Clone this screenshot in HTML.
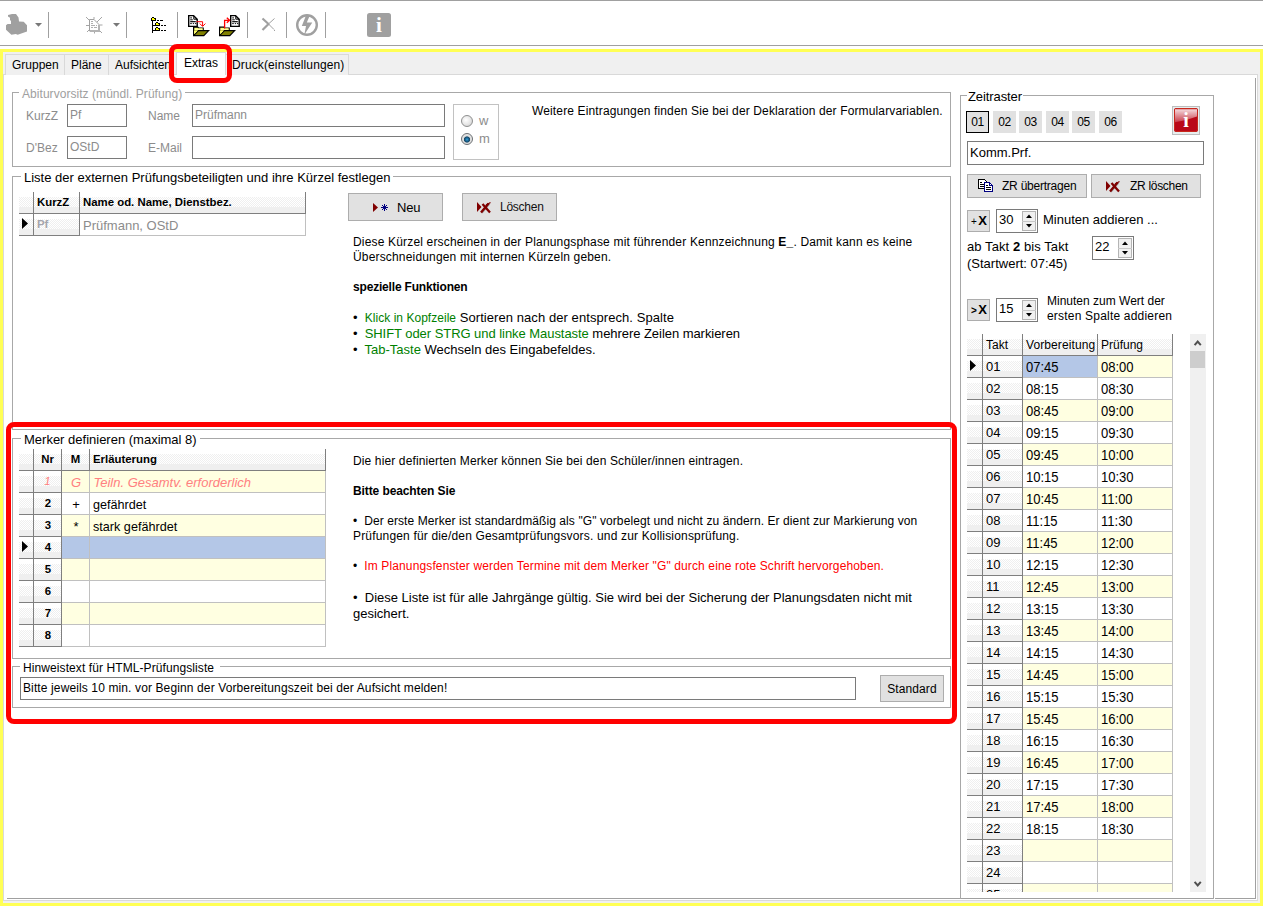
<!DOCTYPE html>
<html lang="de"><head><meta charset="utf-8"><title>Extras</title>
<style>
*{box-sizing:border-box;margin:0;padding:0}
html,body{width:1263px;height:906px;overflow:hidden;background:#fff}
body{position:relative;font-family:"Liberation Sans",sans-serif;font-size:12px;color:#000}
.a{position:absolute}
.t{position:absolute;white-space:pre;line-height:16px}
.f13{font-size:13px}
.f12{font-size:12px}
.sep{position:absolute;top:12px;width:1px;height:26px;background:#a0a0a0}
.tab{position:absolute;top:54px;height:21px;border:1px solid #d9d9d9;border-bottom:none;background:#f0f0f0;font-size:12px;line-height:21px;text-align:left;padding-left:6px;white-space:pre}
.gb{position:absolute;border:1px solid #a8a8a8}
.gbc{position:absolute;background:#fff;white-space:pre;line-height:16px;padding:0 3px}
.inp{position:absolute;border:1px solid #7a7a7a;background:#fff;white-space:pre;font-size:12px;line-height:20px;padding-left:2px;overflow:hidden}
.btn{position:absolute;background:#e1e1e1;border:1px solid #adadad;white-space:pre}
.fx{position:absolute;background:linear-gradient(#fff,#fff) 0 0/100% 5px no-repeat,linear-gradient(#efefef,#efefef) 0 100%/100% 6px no-repeat,repeating-conic-gradient(#efefef 0 25%,#fff 0 50%) 0 0/2px 2px;border-right:1px solid #7f7f7f;border-bottom:1px solid #7f7f7f;white-space:pre;overflow:hidden}
.hb{font-weight:bold;font-size:11.4px;line-height:20px}
.c{position:absolute;border-right:1px solid #c0c0c0;border-bottom:1px solid #c0c0c0;white-space:pre;overflow:hidden;font-size:13px;line-height:22px;padding-left:4px;padding-top:1px}
.y{background:#ffffe1}
.w{background:#fff}
.sel{background:#b4c7e7}
.tv{display:inline-block;font-size:14px;transform:scaleX(.93);transform-origin:0 50%}
.seg{font-family:"Liberation Sans",sans-serif}
</style></head>
<body>
<div class="a" style="left:0;top:0;width:1263px;height:1px;background:#a0a0a0"></div>
<div class="a" style="left:0;top:45px;width:1263px;height:1px;background:#a0a0a0"></div>
<div class="sep" style="left:48px"></div>
<div class="sep" style="left:126px"></div>
<div class="sep" style="left:177px"></div>
<div class="sep" style="left:247px"></div>
<div class="sep" style="left:286px"></div>
<div class="sep" style="left:325px"></div>
<svg class="a" style="left:0;top:0" width="420" height="46" viewBox="0 0 420 46">
<polygon fill="#a0a0a0" points="8,15 12,14 16,14 18.5,17.5 19,21.5 23.7,21.8 27,25.3 27,31.6 22,33.2 17.7,34.8 15.8,34 11.4,34.8 6,29.7 6,25.3 7.6,24 11,24 11,21 10,20 10,17.7 8,16.4"/>
<polygon fill="#787878" points="35,23 42,23 38.5,26.8"/>
<polygon fill="#787878" points="113,23 120,23 116.5,26.8"/>
<g stroke="#a6a6a6" stroke-width="1" fill="none"><path d="M86,17 L89.5,20.5 M94,17 V19.5 M102,17 L96.5,22.5 M86,25.5 H89 M100,25 H102.5 M87,32 L89.5,29.5 M94.5,32 V33.5 M99.5,30.5 L102,33"/><path d="M89.5,19.5 H94 L99.5,25 V31 H89.5 Z" fill="#fff" stroke="#a0a0a0"/><path d="M90,31 H100 M99,25 V31.5" stroke="#b4b4b4" stroke-width="2"/><path d="M91,21.5 H93 M91,23.5 H93 M91,25.5 H95 M96,25.5 H97 M91,27.5 H93 M94,27.5 H97" stroke="#b0b0b0" shape-rendering="crispEdges"/></g>
<g shape-rendering="crispEdges"><rect x="152" y="20" width="1" height="13" fill="#000"/><path d="M151,18 h1 v-1 h2 v1 h2 v3 h-5 z" fill="#000"/><path d="M152,18 h2 v1 h1 v1 h-3 z" fill="#ffff00"/><path d="M155,23 h1 v-1 h2 v1 h2 v3 h-5 z" fill="#000"/><path d="M156,23 h2 v1 h1 v1 h-3 z" fill="#ffff00"/><path d="M155,28 h1 v-1 h2 v1 h2 v3 h-5 z" fill="#000"/><path d="M156,28 h2 v1 h1 v1 h-3 z" fill="#ffff00"/><path d="M153,25 h2 M153,30 h2" stroke="#000"/><path d="M157,20.5 h2 M160,20.5 h3 M161,25.5 h2 M164,25.5 h2 M161,30.5 h2 M164,30.5 h2" stroke="#000" stroke-width="1"/></g>
<g><path d="M188.7,15.6 H193.6 L197.2,19.4 V26.4 H188.7 Z" fill="#fff" stroke="#000" stroke-width="1.4" stroke-linejoin="miter"/><path d="M193.8,16 V19.2 H197" fill="none" stroke="#000" stroke-width="1"/><path d="M190.2,17.9 h1.8 M190.2,19.8 h2.6 M190.2,23.6 h1.6 M192.8,23.6 h1.3 M195,23.6 h1.2" stroke="#000" stroke-width=".95"/><path d="M190.2,21.7 h5.6" stroke="#000" stroke-width="1.2"/><path d="M193.6,27.200000000000003 H197.8 L198.6,28.0 H203.2 V30.400000000000002 H193.6 Z" fill="#ffff55" stroke="#000" stroke-width="1.2"/><path d="M194.2,28.400000000000002 H202.6 V30.200000000000003 H194.2 Z" fill="#ffffa0"/><path d="M193.6,27.200000000000003 V35.6 H203.8 L208.6,30.6 H198.4 L193.6,35.6" fill="#808000" stroke="#000" stroke-width="1.2" stroke-linejoin="miter"/><path d="M194.2,30.200000000000003 V34.2 L198,30.200000000000003 Z" fill="#ffff55"/><path d="M196.4,21.7 H202.6 V26 M199.8,23.6 L202.6,26.4 L205.4,23.6" fill="none" stroke="#ff0000" stroke-width="1"/></g>
<g><path d="M219.6,27.200000000000003 H223.8 L224.6,28.0 H229.2 V30.400000000000002 H219.6 Z" fill="#ffff55" stroke="#000" stroke-width="1.2"/><path d="M220.2,28.400000000000002 H228.6 V30.200000000000003 H220.2 Z" fill="#ffffa0"/><path d="M219.6,27.200000000000003 V35.6 H229.8 L234.6,30.6 H224.4 L219.6,35.6" fill="#808000" stroke="#000" stroke-width="1.2" stroke-linejoin="miter"/><path d="M220.2,30.200000000000003 V34.2 L224,30.200000000000003 Z" fill="#ffff55"/><path d="M230.7,15.6 H235.6 L239.2,19.4 V26.4 H230.7 Z" fill="#fff" stroke="#000" stroke-width="1.4" stroke-linejoin="miter"/><path d="M235.8,16 V19.2 H239" fill="none" stroke="#000" stroke-width="1"/><path d="M232.2,17.9 h1.8 M232.2,19.8 h2.6 M232.2,23.6 h1.6 M234.8,23.6 h1.3 M237,23.6 h1.2" stroke="#000" stroke-width=".95"/><path d="M232.2,21.7 h5.6" stroke="#000" stroke-width="1.2"/><path d="M224.6,28.5 V20.3 H229.4 M226.8,17.8 L229.6,20.3 L226.8,22.8" fill="none" stroke="#ff0000" stroke-width="1.3"/></g>
<path d="M262.5,18.5 L268.5,24 M262.5,30 L269,23.5" stroke="#a0a0a0" stroke-width="2.2" fill="none"/><path d="M268.5,24 L274,29.5 M269,23.5 L274.5,18.5" stroke="#a0a0a0" stroke-width="1" fill="none"/><rect x="274" y="30" width="1" height="1" fill="#a0a0a0"/>
<circle cx="307" cy="25" r="9.8" fill="none" stroke="#a0a0a0" stroke-width="2.4"/><polygon fill="#a0a0a0" points="306,15.5 309.8,15.5 306.8,22.5 312.3,22.5 304.3,34.8 306,26 301.8,26"/>
<rect x="367" y="13" width="24" height="24" rx="2.5" fill="#a0a0a0"/>
<text x="379" y="32.3" font-family="Liberation Serif, serif" font-weight="bold" font-size="21" fill="#fff" text-anchor="middle">i</text>
</svg>
<div class="a" style="left:0;top:49px;width:1263px;height:857px;background:#f0f0f0;border:3px solid #ffff55"></div>
<div class="a" style="left:3px;top:74px;width:1255px;height:827px;background:#fff;border:1px solid #d9d9d9"></div>
<div class="tab" style="left:5px;width:60px">Gruppen</div>
<div class="tab" style="left:64px;width:45px">Pläne</div>
<div class="tab" style="left:108px;width:66px">Aufsichten</div>
<div class="tab" style="left:225px;width:124px;letter-spacing:.12px">Druck(einstellungen)</div>
<div class="tab" style="left:176px;width:50px;top:52px;height:23px;background:#fff;line-height:20px;padding-left:7px">Extras</div>
<div class="a" style="left:7px;top:898px;width:1207px;height:1px;background:#a0a0a0"></div>
<div class="a" style="left:1215px;top:898px;width:41px;height:1px;background:#a0a0a0"></div>
<div class="a" style="left:1255px;top:78px;width:1px;height:821px;background:#a0a0a0"></div>
<div class="gb" style="left:12px;top:92px;width:939px;height:75px"></div>
<div class="gbc f12" style="left:19px;top:86px;color:#a0a0a0;letter-spacing:.05px">Abiturvorsitz (mündl. Prüfung)</div>
<div class="t f12" style="left:26px;top:108px;color:#8c8c8c">KurzZ</div>
<div class="inp" style="left:67px;top:104px;width:60px;height:23px;color:#8c8c8c">Pf</div>
<div class="t f12" style="left:148px;top:108px;color:#8c8c8c">Name</div>
<div class="inp" style="left:192px;top:104px;width:253px;height:23px;color:#8c8c8c">Prüfmann</div>
<div class="t f12" style="left:26px;top:140px;color:#8c8c8c">D'Bez</div>
<div class="inp" style="left:67px;top:136px;width:60px;height:23px;color:#8c8c8c">OStD</div>
<div class="t f12" style="left:148px;top:140px;color:#8c8c8c">E-Mail</div>
<div class="inp" style="left:192px;top:136px;width:253px;height:23px"></div>
<div class="a" style="left:453px;top:104px;width:46px;height:56px;border:1px solid #c2c2c2;background:#fff"></div>
<div class="a" style="left:461px;top:115px;width:12px;height:12px;border-radius:50%;border:1px solid #8e8f8f;background:radial-gradient(circle at 40% 40%,#fff 0,#e8e8e8 50%,#c8c8c8 100%)"></div>
<div class="a" style="left:461px;top:133px;width:12px;height:12px;border-radius:50%;border:1px solid #6b6f73;background:radial-gradient(circle at 50% 55%,#3aa6dc 0,#1d6e9e 18%,#164868 36%,#dcdcdc 47%,#f4f4f4 100%)"></div>
<div class="t f13" style="left:479px;top:113px;color:#8c8c8c">w</div>
<div class="t f13" style="left:479px;top:131px;color:#8c8c8c">m</div>
<div class="t f12" style="left:532px;top:103px;letter-spacing:.135px">Weitere Eintragungen finden Sie bei der Deklaration der Formularvariablen.</div>
<div class="gb" style="left:12px;top:176px;width:939px;height:254px"></div>
<div class="gbc f13" style="left:21px;top:170px">Liste der externen Prüfungsbeteiligten und ihre Kürzel festlegen</div>
<div class="fx" style="left:19px;top:192px;width:15px;height:22px"></div>
<div class="fx hb" style="left:34px;top:192px;width:46px;height:22px;padding-left:3px">KurzZ</div>
<div class="fx hb" style="left:80px;top:192px;width:226px;height:22px;padding-left:3px">Name od. Name, Dienstbez.</div>
<div class="fx" style="left:19px;top:214px;width:15px;height:22px"></div>
<svg class="a" style="left:22px;top:218px" width="8" height="12"><polygon points="0,0 6,5.5 0,11" fill="#000"/></svg>
<div class="fx hb" style="left:34px;top:214px;width:46px;height:22px;padding-left:3px;color:#a4a4ac">Pf</div>
<div class="c w" style="left:80px;top:214px;width:226px;height:22px;color:#8c8c8c;font-size:13px;padding-left:3px">Prüfmann, OStD</div>
<div class="btn" style="left:348px;top:193px;width:95px;height:28px"></div>
<svg class="a" style="left:372px;top:202px" width="22" height="12"><polygon points="1,1 6,5.5 1,10" fill="#800000"/><path d="M12.5,2 v7 M9,5.5 h7 M10,3 l5,5 M15,3 l-5,5" stroke="#000080" stroke-width="1"/></svg>
<div class="t f13" style="left:397px;top:200px;letter-spacing:-.2px">Neu</div>
<div class="btn" style="left:462px;top:193px;width:95px;height:28px"></div>
<svg class="a" style="left:476px;top:201px" width="17" height="13"><polygon points="1,1 5.5,6 1,11" fill="#800000"/><path d="M6,12 L13.5,3" stroke="#9a9a9a" stroke-width="1.2" fill="none"/><path d="M5,11.5 L12.5,2.5 M6.5,3 L14,11.5" stroke="#800000" stroke-width="2.3" fill="none"/><path d="M10,4 l4.5,-2.5" stroke="#800000" stroke-width="1.2"/></svg>
<div class="t" style="left:500px;top:199px;font-size:12px;letter-spacing:-.25px;color:#111">Löschen</div>
<div class="t f12" style="left:353px;top:235px;line-height:15px;letter-spacing:.17px">Diese Kürzel erscheinen in der Planungsphase mit führender Kennzeichnung <b>E_</b>. Damit kann es keine
Überschneidungen mit internen Kürzeln geben.</div>
<div class="t f12" style="left:353px;top:280px;line-height:15px;font-weight:bold;letter-spacing:-.18px">spezielle Funktionen</div>
<div class="t f13" style="left:353px;top:310px;line-height:16px">•  <span style="color:#008000;font-size:12px;letter-spacing:.03px">Klick in Kopfzeile</span><span style="letter-spacing:.07px"> Sortieren nach der entsprech. Spalte</span>
<span style="letter-spacing:-.05px">•  <span style="color:#008000">SHIFT oder STRG und linke Maustaste</span> mehrere Zeilen markieren</span>
•  <span style="color:#008000">Tab-Taste</span> Wechseln des Eingabefeldes.</div>
<div class="gb" style="left:12px;top:438px;width:939px;height:221px"></div>
<div class="gbc f13" style="left:21px;top:432px">Merker definieren (maximal 8)</div>
<div class="fx" style="left:19px;top:449px;width:15px;height:22px"></div>
<div class="fx hb" style="left:34px;top:449px;width:28px;height:22px;text-align:center">Nr</div>
<div class="fx hb" style="left:62px;top:449px;width:28px;height:22px;text-align:center">M</div>
<div class="fx hb" style="left:90px;top:449px;width:236px;height:22px;padding-left:3px">Erläuterung</div>
<div class="fx" style="left:19px;top:471px;width:15px;height:22px"></div><div class="fx" style="left:34px;top:471px;width:28px;height:22px;text-align:center;font-style:italic;font-size:11.4px;line-height:20px;color:#ff8080">1</div><div class="c y" style="left:62px;top:471px;width:28px;height:22px;padding:1px 0 0 1px;text-align:center;font-style:italic;color:#ff8080">G</div><div class="c y" style="left:90px;top:471px;width:236px;height:22px;padding-left:3.5px;font-style:italic;color:#ff8080">Teiln. Gesamtv. erforderlich</div>
<div class="fx" style="left:19px;top:493px;width:15px;height:22px"></div><div class="fx hb" style="left:34px;top:493px;width:28px;height:22px;text-align:center;padding-left:1px">2</div><div class="c w" style="left:62px;top:493px;width:28px;height:22px;padding:1px 0 0 1px;text-align:center">+</div><div class="c w" style="left:90px;top:493px;width:236px;height:22px;padding:1px 0 0 3px;line-height:21px"><span class="tv" style="font-size:13.5px;transform:scaleX(.935)">gefährdet</span></div>
<div class="fx" style="left:19px;top:515px;width:15px;height:22px"></div><div class="fx hb" style="left:34px;top:515px;width:28px;height:22px;text-align:center;padding-left:1px">3</div><div class="c y" style="left:62px;top:515px;width:28px;height:22px;padding:1px 0 0 1px;text-align:center">*</div><div class="c y" style="left:90px;top:515px;width:236px;height:22px;padding:1px 0 0 3px;line-height:21px"><span class="tv" style="font-size:13.5px;transform:scaleX(.935)">stark gefährdet</span></div>
<div class="fx" style="left:19px;top:537px;width:15px;height:22px"></div><div class="fx hb" style="left:34px;top:537px;width:28px;height:22px;text-align:center;padding-left:1px">4</div><div class="c sel" style="left:62px;top:537px;width:28px;height:22px;padding:1px 0 0 1px;text-align:center"></div><div class="c sel" style="left:90px;top:537px;width:236px;height:22px;padding:1px 0 0 3px;line-height:21px"><span class="tv" style="font-size:13.5px;transform:scaleX(.935)"></span></div>
<div class="fx" style="left:19px;top:559px;width:15px;height:22px"></div><div class="fx hb" style="left:34px;top:559px;width:28px;height:22px;text-align:center;padding-left:1px">5</div><div class="c y" style="left:62px;top:559px;width:28px;height:22px;padding:1px 0 0 1px;text-align:center"></div><div class="c y" style="left:90px;top:559px;width:236px;height:22px;padding:1px 0 0 3px;line-height:21px"><span class="tv" style="font-size:13.5px;transform:scaleX(.935)"></span></div>
<div class="fx" style="left:19px;top:581px;width:15px;height:22px"></div><div class="fx hb" style="left:34px;top:581px;width:28px;height:22px;text-align:center;padding-left:1px">6</div><div class="c w" style="left:62px;top:581px;width:28px;height:22px;padding:1px 0 0 1px;text-align:center"></div><div class="c w" style="left:90px;top:581px;width:236px;height:22px;padding:1px 0 0 3px;line-height:21px"><span class="tv" style="font-size:13.5px;transform:scaleX(.935)"></span></div>
<div class="fx" style="left:19px;top:603px;width:15px;height:22px"></div><div class="fx hb" style="left:34px;top:603px;width:28px;height:22px;text-align:center;padding-left:1px">7</div><div class="c y" style="left:62px;top:603px;width:28px;height:22px;padding:1px 0 0 1px;text-align:center"></div><div class="c y" style="left:90px;top:603px;width:236px;height:22px;padding:1px 0 0 3px;line-height:21px"><span class="tv" style="font-size:13.5px;transform:scaleX(.935)"></span></div>
<div class="fx" style="left:19px;top:625px;width:15px;height:22px"></div><div class="fx hb" style="left:34px;top:625px;width:28px;height:22px;text-align:center;padding-left:1px">8</div><div class="c w" style="left:62px;top:625px;width:28px;height:22px;padding:1px 0 0 1px;text-align:center"></div><div class="c w" style="left:90px;top:625px;width:236px;height:22px;padding:1px 0 0 3px;line-height:21px"><span class="tv" style="font-size:13.5px;transform:scaleX(.935)"></span></div>
<svg class="a" style="left:22px;top:541px" width="8" height="12"><polygon points="0,0 6,5.5 0,11" fill="#000"/></svg>
<div class="t f12" style="left:353px;top:454px;line-height:15px;letter-spacing:.13px">Die hier definierten Merker können Sie bei den Schüler/innen eintragen.</div>
<div class="t f12" style="left:353px;top:484px;line-height:15px;font-weight:bold;letter-spacing:-.1px">Bitte beachten Sie</div>
<div class="t f12" style="left:353px;top:514px;line-height:15px;letter-spacing:.17px"><span style="letter-spacing:.09px">•  Der erste Merker ist standardmäßig als "G" vorbelegt und nicht zu ändern. Er dient zur Markierung von</span>
Prüfungen für die/den Gesamtprüfungsvors. und zur Kollisionsprüfung.</div>
<div class="t f12" style="left:353px;top:559px;line-height:15px;letter-spacing:.13px">•  <span style="color:#ff0000">Im Planungsfenster werden Termine mit dem Merker "G" durch eine rote Schrift hervorgehoben.</span></div>
<div class="t f13" style="left:353px;top:590px;line-height:15.5px">•  Diese Liste ist für alle Jahrgänge gültig. Sie wird bei der Sicherung der Planungsdaten nicht mit
gesichert.</div>
<div class="gb" style="left:12px;top:666px;width:939px;height:42px"></div>
<div class="gbc f12" style="left:20px;top:660px;letter-spacing:.09px;padding-right:6px">Hinweistext für HTML-Prüfungsliste</div>
<div class="inp" style="left:20px;top:677px;width:836px;height:23px;line-height:21px;letter-spacing:.12px;padding-left:2px">Bitte jeweils 10 min. vor Beginn der Vorbereitungszeit bei der Aufsicht melden!</div>
<div class="btn" style="left:880px;top:675px;width:64px;height:27px;text-align:center;font-size:12px;letter-spacing:.1px;line-height:26px">Standard</div>
<div class="a" style="left:169px;top:44px;width:63px;height:39px;border:5px solid #ff0000;border-radius:8px"></div>
<div class="a" style="left:6px;top:422px;width:951px;height:302px;border:5px solid #ff0000;border-radius:8px"></div>
<div class="gb" style="left:960px;top:95px;width:254px;height:804px;border-bottom:none"></div>
<div class="gbc f13" style="left:967px;top:89px;padding:0 1px;letter-spacing:-.1px">Zeitraster</div>
<div class="btn seg" style="left:966px;top:111px;width:23px;height:22px;border:1px solid #000;text-align:center;font-size:12px;letter-spacing:-.3px;line-height:20px">01</div><div class="btn seg" style="left:993px;top:111px;width:23px;height:22px;border:1px solid #e1e1e1;text-align:center;font-size:12px;letter-spacing:-.3px;line-height:20px">02</div><div class="btn seg" style="left:1019px;top:111px;width:23px;height:22px;border:1px solid #e1e1e1;text-align:center;font-size:12px;letter-spacing:-.3px;line-height:20px">03</div><div class="btn seg" style="left:1046px;top:111px;width:23px;height:22px;border:1px solid #e1e1e1;text-align:center;font-size:12px;letter-spacing:-.3px;line-height:20px">04</div><div class="btn seg" style="left:1072px;top:111px;width:23px;height:22px;border:1px solid #e1e1e1;text-align:center;font-size:12px;letter-spacing:-.3px;line-height:20px">05</div><div class="btn seg" style="left:1099px;top:111px;width:23px;height:22px;border:1px solid #e1e1e1;text-align:center;font-size:12px;letter-spacing:-.3px;line-height:20px">06</div>
<div class="btn" style="left:1172px;top:106px;width:28px;height:29px;border-color:#bdbdbd;background:#e8eeee"></div>
<svg class="a" style="left:1174px;top:108px" width="24" height="24" viewBox="0 0 24 24"><defs><linearGradient id="gl" x1="0" y1="0" x2="0" y2="1"><stop offset="0" stop-color="#fff" stop-opacity=".85"/><stop offset="1" stop-color="#fff" stop-opacity=".22"/></linearGradient></defs><rect width="24" height="24" rx="2.2" fill="#b90818"/><rect x=".5" y=".5" width="23" height="23" rx="2" fill="none" stroke="#c8281c" stroke-width="1"/><path d="M1,1.2 H23 V8.5 Q13,12.5 1,14.2 Z" fill="url(#gl)"/><text x="12" y="19.2" font-family="Liberation Serif, serif" font-weight="bold" font-size="20" fill="#fff" text-anchor="middle">i</text></svg>
<div class="inp" style="left:967px;top:141px;width:237px;height:24px;font-size:13px;line-height:22px;padding-left:2px">Komm.Prf.</div>
<div class="btn" style="left:967px;top:174px;width:120px;height:24px"></div>
<svg class="a" style="left:978px;top:179px" width="16" height="14" shape-rendering="crispEdges"><path d="M0.5,0.5 H6.5 L8.5,2.5 V9.5 H0.5 Z" fill="#fff" stroke="#000"/><path d="M2,3.5 h2 M2,5.5 h4 M2,7.5 h4" stroke="#000"/><path d="M6.5,3.5 H11.5 L14.5,6.5 V12.5 H6.5 Z" fill="#fff" stroke="#000080"/><path d="M11.5,4 V6.5 H14" fill="none" stroke="#000080"/><path d="M8,6.5 h2 M8,8.5 h5 M8,10.5 h5" stroke="#000"/></svg>
<div class="t seg" style="left:1002px;top:178px;font-size:12px;letter-spacing:-.23px">ZR übertragen</div>
<div class="btn" style="left:1091px;top:174px;width:110px;height:24px"></div>
<svg class="a" style="left:1105px;top:180px" width="17" height="13"><polygon points="1,1 5.5,6 1,11" fill="#800000"/><path d="M6,12 L13.5,3" stroke="#9a9a9a" stroke-width="1.2" fill="none"/><path d="M5,11.5 L12.5,2.5 M6.5,3 L14,11.5" stroke="#800000" stroke-width="2.3" fill="none"/><path d="M10,4 l4.5,-2.5" stroke="#800000" stroke-width="1.2"/></svg>
<div class="t seg" style="left:1130px;top:178px;font-size:12px;letter-spacing:-.3px">ZR löschen</div>
<div class="btn" style="left:967px;top:210px;width:23px;height:22px"></div>
<div class="t" style="left:970px;top:213px;font-weight:bold;font-size:13px"><span style="font-size:10px;font-weight:normal;margin:0 1.5px 0 1px;position:relative;top:-.5px">+</span>X</div>
<div class="inp" style="left:996px;top:209px;width:42px;height:24px;font-size:13px;line-height:19px;padding-left:2px">30</div><div class="a" style="left:1022px;top:211px;width:14px;height:20px;background:#f0f0f0;border:1px solid #b4b4b4"></div><div class="a" style="left:1022px;top:221px;width:14px;height:1px;background:#c8c8c8"></div><svg class="a" style="left:1022px;top:211px" width="14" height="20"><polygon points="4,7.0 10,7.0 7,3.5" fill="#000"/><polygon points="4,13.0 10,13.0 7,16.5" fill="#000"/></svg>
<div class="t f13" style="left:1043px;top:212px">Minuten addieren ...</div>
<div class="t f13" style="left:967px;top:239px;line-height:16.5px"><span style="letter-spacing:.08px">ab Takt <b>2</b> bis Takt</span>
(Startwert: 07:45)</div>
<div class="inp" style="left:1092px;top:236px;width:42px;height:24px;font-size:13px;line-height:19px;padding-left:2px">22</div><div class="a" style="left:1118px;top:238px;width:14px;height:20px;background:#f0f0f0;border:1px solid #b4b4b4"></div><div class="a" style="left:1118px;top:248px;width:14px;height:1px;background:#c8c8c8"></div><svg class="a" style="left:1118px;top:238px" width="14" height="20"><polygon points="4,7.0 10,7.0 7,3.5" fill="#000"/><polygon points="4,13.0 10,13.0 7,16.5" fill="#000"/></svg>
<div class="btn" style="left:967px;top:299px;width:23px;height:22px"></div>
<div class="t" style="left:970px;top:302px;font-weight:bold;font-size:13px"><span style="font-size:10px;margin:0 1.5px 0 1px;position:relative;top:-.5px">&gt;</span>X</div>
<div class="inp" style="left:996px;top:298px;width:42px;height:24px;font-size:13px;line-height:19px;padding-left:2px">15</div><div class="a" style="left:1022px;top:300px;width:14px;height:20px;background:#f0f0f0;border:1px solid #b4b4b4"></div><div class="a" style="left:1022px;top:310px;width:14px;height:1px;background:#c8c8c8"></div><svg class="a" style="left:1022px;top:300px" width="14" height="20"><polygon points="4,7.0 10,7.0 7,3.5" fill="#000"/><polygon points="4,13.0 10,13.0 7,16.5" fill="#000"/></svg>
<div class="t f12" style="left:1047px;top:294px;line-height:15px">Minuten zum Wert der
<span style="letter-spacing:.2px">ersten Spalte addieren</span></div>
<div class="fx" style="left:967px;top:334px;width:16px;height:22px"></div><div class="fx" style="left:983px;top:334px;width:40px;height:22px;font-size:12px;line-height:23px;padding-left:3px">Takt</div><div class="fx" style="left:1023px;top:334px;width:75px;height:22px;font-size:12px;line-height:23px;padding-left:3px;letter-spacing:.1px">Vorbereitung</div><div class="fx" style="left:1098px;top:334px;width:75px;height:22px;font-size:12px;line-height:23px;padding-left:3px">Prüfung</div>
<div class="a" style="left:967px;top:356px;width:206px;height:536px;overflow:hidden"><div class="fx" style="left:0;top:0px;width:16px;height:22px"></div><div class="fx" style="left:16px;top:0px;width:40px;height:22px;font-size:13px;line-height:21px;padding-left:3px">01</div><div class="c sel" style="left:56px;top:0px;width:75px;height:22px;padding:0 0 0 3px"><span class="tv">07:45</span></div><div class="c y" style="left:131px;top:0px;width:75px;height:22px;padding:0 0 0 3px"><span class="tv">08:00</span></div>
<div class="fx" style="left:0;top:22px;width:16px;height:22px"></div><div class="fx" style="left:16px;top:22px;width:40px;height:22px;font-size:13px;line-height:21px;padding-left:3px">02</div><div class="c w" style="left:56px;top:22px;width:75px;height:22px;padding:0 0 0 3px"><span class="tv">08:15</span></div><div class="c w" style="left:131px;top:22px;width:75px;height:22px;padding:0 0 0 3px"><span class="tv">08:30</span></div>
<div class="fx" style="left:0;top:44px;width:16px;height:22px"></div><div class="fx" style="left:16px;top:44px;width:40px;height:22px;font-size:13px;line-height:21px;padding-left:3px">03</div><div class="c y" style="left:56px;top:44px;width:75px;height:22px;padding:0 0 0 3px"><span class="tv">08:45</span></div><div class="c y" style="left:131px;top:44px;width:75px;height:22px;padding:0 0 0 3px"><span class="tv">09:00</span></div>
<div class="fx" style="left:0;top:66px;width:16px;height:22px"></div><div class="fx" style="left:16px;top:66px;width:40px;height:22px;font-size:13px;line-height:21px;padding-left:3px">04</div><div class="c w" style="left:56px;top:66px;width:75px;height:22px;padding:0 0 0 3px"><span class="tv">09:15</span></div><div class="c w" style="left:131px;top:66px;width:75px;height:22px;padding:0 0 0 3px"><span class="tv">09:30</span></div>
<div class="fx" style="left:0;top:88px;width:16px;height:22px"></div><div class="fx" style="left:16px;top:88px;width:40px;height:22px;font-size:13px;line-height:21px;padding-left:3px">05</div><div class="c y" style="left:56px;top:88px;width:75px;height:22px;padding:0 0 0 3px"><span class="tv">09:45</span></div><div class="c y" style="left:131px;top:88px;width:75px;height:22px;padding:0 0 0 3px"><span class="tv">10:00</span></div>
<div class="fx" style="left:0;top:110px;width:16px;height:22px"></div><div class="fx" style="left:16px;top:110px;width:40px;height:22px;font-size:13px;line-height:21px;padding-left:3px">06</div><div class="c w" style="left:56px;top:110px;width:75px;height:22px;padding:0 0 0 3px"><span class="tv">10:15</span></div><div class="c w" style="left:131px;top:110px;width:75px;height:22px;padding:0 0 0 3px"><span class="tv">10:30</span></div>
<div class="fx" style="left:0;top:132px;width:16px;height:22px"></div><div class="fx" style="left:16px;top:132px;width:40px;height:22px;font-size:13px;line-height:21px;padding-left:3px">07</div><div class="c y" style="left:56px;top:132px;width:75px;height:22px;padding:0 0 0 3px"><span class="tv">10:45</span></div><div class="c y" style="left:131px;top:132px;width:75px;height:22px;padding:0 0 0 3px"><span class="tv">11:00</span></div>
<div class="fx" style="left:0;top:154px;width:16px;height:22px"></div><div class="fx" style="left:16px;top:154px;width:40px;height:22px;font-size:13px;line-height:21px;padding-left:3px">08</div><div class="c w" style="left:56px;top:154px;width:75px;height:22px;padding:0 0 0 3px"><span class="tv">11:15</span></div><div class="c w" style="left:131px;top:154px;width:75px;height:22px;padding:0 0 0 3px"><span class="tv">11:30</span></div>
<div class="fx" style="left:0;top:176px;width:16px;height:22px"></div><div class="fx" style="left:16px;top:176px;width:40px;height:22px;font-size:13px;line-height:21px;padding-left:3px">09</div><div class="c y" style="left:56px;top:176px;width:75px;height:22px;padding:0 0 0 3px"><span class="tv">11:45</span></div><div class="c y" style="left:131px;top:176px;width:75px;height:22px;padding:0 0 0 3px"><span class="tv">12:00</span></div>
<div class="fx" style="left:0;top:198px;width:16px;height:22px"></div><div class="fx" style="left:16px;top:198px;width:40px;height:22px;font-size:13px;line-height:21px;padding-left:3px">10</div><div class="c w" style="left:56px;top:198px;width:75px;height:22px;padding:0 0 0 3px"><span class="tv">12:15</span></div><div class="c w" style="left:131px;top:198px;width:75px;height:22px;padding:0 0 0 3px"><span class="tv">12:30</span></div>
<div class="fx" style="left:0;top:220px;width:16px;height:22px"></div><div class="fx" style="left:16px;top:220px;width:40px;height:22px;font-size:13px;line-height:21px;padding-left:3px">11</div><div class="c y" style="left:56px;top:220px;width:75px;height:22px;padding:0 0 0 3px"><span class="tv">12:45</span></div><div class="c y" style="left:131px;top:220px;width:75px;height:22px;padding:0 0 0 3px"><span class="tv">13:00</span></div>
<div class="fx" style="left:0;top:242px;width:16px;height:22px"></div><div class="fx" style="left:16px;top:242px;width:40px;height:22px;font-size:13px;line-height:21px;padding-left:3px">12</div><div class="c w" style="left:56px;top:242px;width:75px;height:22px;padding:0 0 0 3px"><span class="tv">13:15</span></div><div class="c w" style="left:131px;top:242px;width:75px;height:22px;padding:0 0 0 3px"><span class="tv">13:30</span></div>
<div class="fx" style="left:0;top:264px;width:16px;height:22px"></div><div class="fx" style="left:16px;top:264px;width:40px;height:22px;font-size:13px;line-height:21px;padding-left:3px">13</div><div class="c y" style="left:56px;top:264px;width:75px;height:22px;padding:0 0 0 3px"><span class="tv">13:45</span></div><div class="c y" style="left:131px;top:264px;width:75px;height:22px;padding:0 0 0 3px"><span class="tv">14:00</span></div>
<div class="fx" style="left:0;top:286px;width:16px;height:22px"></div><div class="fx" style="left:16px;top:286px;width:40px;height:22px;font-size:13px;line-height:21px;padding-left:3px">14</div><div class="c w" style="left:56px;top:286px;width:75px;height:22px;padding:0 0 0 3px"><span class="tv">14:15</span></div><div class="c w" style="left:131px;top:286px;width:75px;height:22px;padding:0 0 0 3px"><span class="tv">14:30</span></div>
<div class="fx" style="left:0;top:308px;width:16px;height:22px"></div><div class="fx" style="left:16px;top:308px;width:40px;height:22px;font-size:13px;line-height:21px;padding-left:3px">15</div><div class="c y" style="left:56px;top:308px;width:75px;height:22px;padding:0 0 0 3px"><span class="tv">14:45</span></div><div class="c y" style="left:131px;top:308px;width:75px;height:22px;padding:0 0 0 3px"><span class="tv">15:00</span></div>
<div class="fx" style="left:0;top:330px;width:16px;height:22px"></div><div class="fx" style="left:16px;top:330px;width:40px;height:22px;font-size:13px;line-height:21px;padding-left:3px">16</div><div class="c w" style="left:56px;top:330px;width:75px;height:22px;padding:0 0 0 3px"><span class="tv">15:15</span></div><div class="c w" style="left:131px;top:330px;width:75px;height:22px;padding:0 0 0 3px"><span class="tv">15:30</span></div>
<div class="fx" style="left:0;top:352px;width:16px;height:22px"></div><div class="fx" style="left:16px;top:352px;width:40px;height:22px;font-size:13px;line-height:21px;padding-left:3px">17</div><div class="c y" style="left:56px;top:352px;width:75px;height:22px;padding:0 0 0 3px"><span class="tv">15:45</span></div><div class="c y" style="left:131px;top:352px;width:75px;height:22px;padding:0 0 0 3px"><span class="tv">16:00</span></div>
<div class="fx" style="left:0;top:374px;width:16px;height:22px"></div><div class="fx" style="left:16px;top:374px;width:40px;height:22px;font-size:13px;line-height:21px;padding-left:3px">18</div><div class="c w" style="left:56px;top:374px;width:75px;height:22px;padding:0 0 0 3px"><span class="tv">16:15</span></div><div class="c w" style="left:131px;top:374px;width:75px;height:22px;padding:0 0 0 3px"><span class="tv">16:30</span></div>
<div class="fx" style="left:0;top:396px;width:16px;height:22px"></div><div class="fx" style="left:16px;top:396px;width:40px;height:22px;font-size:13px;line-height:21px;padding-left:3px">19</div><div class="c y" style="left:56px;top:396px;width:75px;height:22px;padding:0 0 0 3px"><span class="tv">16:45</span></div><div class="c y" style="left:131px;top:396px;width:75px;height:22px;padding:0 0 0 3px"><span class="tv">17:00</span></div>
<div class="fx" style="left:0;top:418px;width:16px;height:22px"></div><div class="fx" style="left:16px;top:418px;width:40px;height:22px;font-size:13px;line-height:21px;padding-left:3px">20</div><div class="c w" style="left:56px;top:418px;width:75px;height:22px;padding:0 0 0 3px"><span class="tv">17:15</span></div><div class="c w" style="left:131px;top:418px;width:75px;height:22px;padding:0 0 0 3px"><span class="tv">17:30</span></div>
<div class="fx" style="left:0;top:440px;width:16px;height:22px"></div><div class="fx" style="left:16px;top:440px;width:40px;height:22px;font-size:13px;line-height:21px;padding-left:3px">21</div><div class="c y" style="left:56px;top:440px;width:75px;height:22px;padding:0 0 0 3px"><span class="tv">17:45</span></div><div class="c y" style="left:131px;top:440px;width:75px;height:22px;padding:0 0 0 3px"><span class="tv">18:00</span></div>
<div class="fx" style="left:0;top:462px;width:16px;height:22px"></div><div class="fx" style="left:16px;top:462px;width:40px;height:22px;font-size:13px;line-height:21px;padding-left:3px">22</div><div class="c w" style="left:56px;top:462px;width:75px;height:22px;padding:0 0 0 3px"><span class="tv">18:15</span></div><div class="c w" style="left:131px;top:462px;width:75px;height:22px;padding:0 0 0 3px"><span class="tv">18:30</span></div>
<div class="fx" style="left:0;top:484px;width:16px;height:22px"></div><div class="fx" style="left:16px;top:484px;width:40px;height:22px;font-size:13px;line-height:21px;padding-left:3px">23</div><div class="c y" style="left:56px;top:484px;width:75px;height:22px;padding:0 0 0 3px"><span class="tv"></span></div><div class="c y" style="left:131px;top:484px;width:75px;height:22px;padding:0 0 0 3px"><span class="tv"></span></div>
<div class="fx" style="left:0;top:506px;width:16px;height:22px"></div><div class="fx" style="left:16px;top:506px;width:40px;height:22px;font-size:13px;line-height:21px;padding-left:3px">24</div><div class="c w" style="left:56px;top:506px;width:75px;height:22px;padding:0 0 0 3px"><span class="tv"></span></div><div class="c w" style="left:131px;top:506px;width:75px;height:22px;padding:0 0 0 3px"><span class="tv"></span></div>
<div class="fx" style="left:0;top:528px;width:16px;height:22px"></div><div class="fx" style="left:16px;top:528px;width:40px;height:22px;font-size:13px;line-height:21px;padding-left:3px">25</div><div class="c y" style="left:56px;top:528px;width:75px;height:22px;padding:0 0 0 3px"><span class="tv"></span></div><div class="c y" style="left:131px;top:528px;width:75px;height:22px;padding:0 0 0 3px"><span class="tv"></span></div>
</div>
<svg class="a" style="left:970px;top:360px" width="8" height="12"><polygon points="0,0 6,5.5 0,11" fill="#000"/></svg>
<div class="a" style="left:1190px;top:334px;width:16px;height:558px;background:#f0f0f0"></div>
<div class="a" style="left:1190px;top:351px;width:15px;height:17px;background:#cdcdcd"></div>
<svg class="a" style="left:1190px;top:334px" width="16" height="558"><path d="M4.6,11.2 L7.7,7.6 L10.8,11.2" fill="none" stroke="#505050" stroke-width="2"/><path d="M4.6,547.8 L7.7,551.4 L10.8,547.8" fill="none" stroke="#505050" stroke-width="2"/></svg>
</body></html>
